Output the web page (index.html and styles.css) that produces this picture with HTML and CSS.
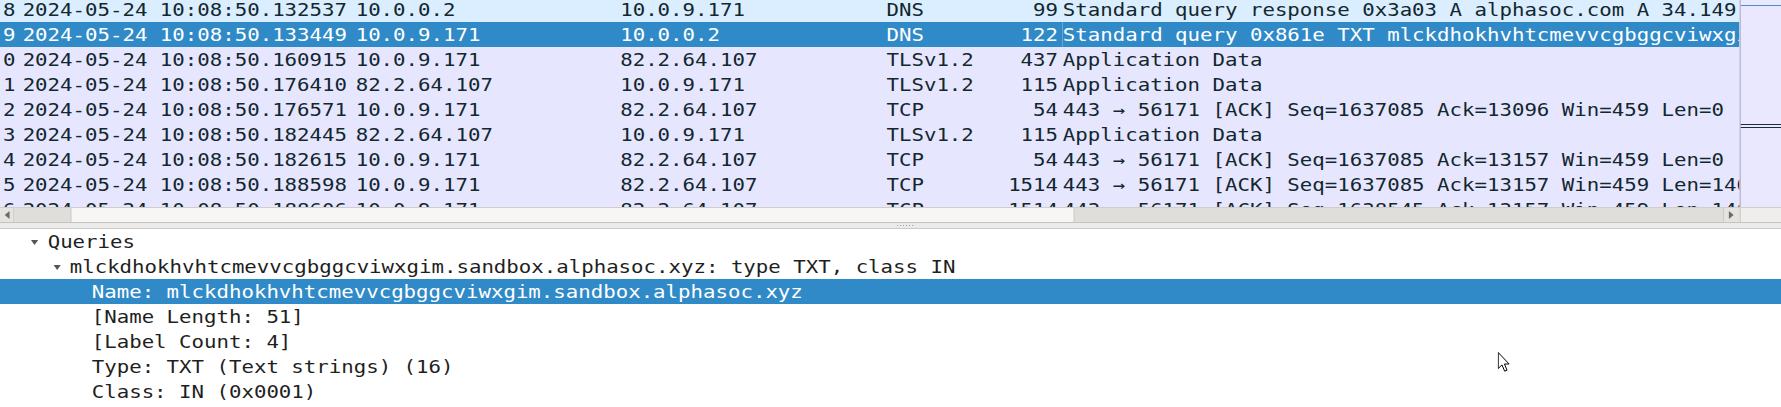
FILE: index.html
```html
<!DOCTYPE html>
<html>
<head>
<meta charset="utf-8">
<title>Wireshark packet list</title>
<link rel="stylesheet" href="styles.css">
</head>
<body>
<div class="app">
  <div class="plist">
    <div class="rows">
      <div class="rows-inner">
        <div class="row dns"><span class="c no">8</span><span class="c time">2024-05-24 10:08:50.132537</span><span class="c src">10.0.0.2</span><span class="c dst">10.0.9.171</span><span class="c proto">DNS</span><span class="c len">99</span><span class="c info">Standard query response 0x3a03 A alphasoc.com A 34.149.153.67</span></div>
        <div class="row sel"><span class="c no">9</span><span class="c time">2024-05-24 10:08:50.133449</span><span class="c src">10.0.9.171</span><span class="c dst">10.0.0.2</span><span class="c proto">DNS</span><span class="c len">122</span><span class="c info">Standard query 0x861e TXT mlckdhokhvhtcmevvcgbggcviwxgim.sandbox.alphasoc.xyz</span></div>
        <div class="row tcp"><span class="c no">0</span><span class="c time">2024-05-24 10:08:50.160915</span><span class="c src">10.0.9.171</span><span class="c dst">82.2.64.107</span><span class="c proto">TLSv1.2</span><span class="c len">437</span><span class="c info">Application Data</span></div>
        <div class="row tcp"><span class="c no">1</span><span class="c time">2024-05-24 10:08:50.176410</span><span class="c src">82.2.64.107</span><span class="c dst">10.0.9.171</span><span class="c proto">TLSv1.2</span><span class="c len">115</span><span class="c info">Application Data</span></div>
        <div class="row tcp"><span class="c no">2</span><span class="c time">2024-05-24 10:08:50.176571</span><span class="c src">10.0.9.171</span><span class="c dst">82.2.64.107</span><span class="c proto">TCP</span><span class="c len">54</span><span class="c info">443 → 56171 [ACK] Seq=1637085 Ack=13096 Win=459 Len=0</span></div>
        <div class="row tcp"><span class="c no">3</span><span class="c time">2024-05-24 10:08:50.182445</span><span class="c src">82.2.64.107</span><span class="c dst">10.0.9.171</span><span class="c proto">TLSv1.2</span><span class="c len">115</span><span class="c info">Application Data</span></div>
        <div class="row tcp"><span class="c no">4</span><span class="c time">2024-05-24 10:08:50.182615</span><span class="c src">10.0.9.171</span><span class="c dst">82.2.64.107</span><span class="c proto">TCP</span><span class="c len">54</span><span class="c info">443 → 56171 [ACK] Seq=1637085 Ack=13157 Win=459 Len=0</span></div>
        <div class="row tcp"><span class="c no">5</span><span class="c time">2024-05-24 10:08:50.188598</span><span class="c src">10.0.9.171</span><span class="c dst">82.2.64.107</span><span class="c proto">TCP</span><span class="c len">1514</span><span class="c info">443 → 56171 [ACK] Seq=1637085 Ack=13157 Win=459 Len=1460</span></div>
        <div class="row tcp"><span class="c no">6</span><span class="c time">2024-05-24 10:08:50.188606</span><span class="c src">10.0.9.171</span><span class="c dst">82.2.64.107</span><span class="c proto">TCP</span><span class="c len">1514</span><span class="c info">443 → 56171 [ACK] Seq=1638545 Ack=13157 Win=459 Len=1460</span></div>
      </div>
    </div>
    <div class="minimap">
      <div class="mm-view"></div>
      <div class="mm-sel"></div>
    </div>
  </div>
  <div class="hscroll">
    <div class="hs-btn hs-left"><span class="tri-left"></span></div>
    <div class="hs-track"><div class="hs-thumb"></div></div>
    <div class="hs-btn hs-right"><span class="tri-right"></span></div>
    <div class="hs-corner"></div>
  </div>
  <div class="splitter"><div class="grip"></div></div>
  <div class="details">
    <div class="node l0"><span class="exp"></span><span>Queries</span></div>
    <div class="node l1"><span class="exp"></span><span>mlckdhokhvhtcmevvcgbggcviwxgim.sandbox.alphasoc.xyz: type TXT, class IN</span></div>
    <div class="node l2 sel"><span>Name: mlckdhokhvhtcmevvcgbggcviwxgim.sandbox.alphasoc.xyz</span></div>
    <div class="node l2"><span>[Name Length: 51]</span></div>
    <div class="node l2"><span>[Label Count: 4]</span></div>
    <div class="node l2"><span>Type: TXT (Text strings) (16)</span></div>
    <div class="node l2"><span>Class: IN (0x0001)</span></div>
  </div>
  <svg class="cursor" width="10" height="20" viewBox="0 0 12 20" preserveAspectRatio="none">
    <path d="M0.5 0.5 L0.5 16.5 L4.3 12.9 L7 19.2 L9.4 18.2 L6.8 12 L11.5 12 Z" fill="#ffffff" stroke="#000000" stroke-width="1" stroke-linejoin="miter"/>
  </svg>
</div>
</body>
</html>
```

FILE: styles.css
```css
* {
  box-sizing: border-box;
}

html,
body {
  margin: 0;
  padding: 0;
  overflow: hidden;
  background: #ffffff;
}

body {
  width: 1781px;
  height: 407px;
}

.app {
  position: relative;
  width: 1495px;
  height: 407px;
  display: flex;
  flex-direction: column;
  transform: scaleX(1.1915);
  transform-origin: 0 0;
  font-family: "DejaVu Sans Mono", monospace;
  font-size: 17.4px;
}

/* ---------- packet list ---------- */
.plist {
  height: 207px;
  flex: none;
  display: flex;
  overflow: hidden;
  background: #e7e6ff;
}

.rows {
  width: 1459.5px;
  flex: none;
  overflow: hidden;
}

.rows-inner {
  margin-top: -3px;
}

.row {
  display: grid;
  grid-template-columns: 16px 282px 222px 223px 80px 68px 1fr;
  height: 25px;
  color: #12272e;
  white-space: nowrap;
}

.row.dns {
  background: #daeeff;
}

.row.tcp {
  background: #e7e6ff;
}

.row.sel {
  background: #308ac7;
  color: #ffffff;
}

.c {
  overflow: hidden;
  padding-top: 2px;
  line-height: 23px;
}

.no {
  text-align: right;
  padding-right: 3px;
}

.time {
  padding-left: 3px;
}

.src,
.dst {
  padding-left: 0.5px;
}

.proto {
  padding-left: 1px;
}

.len {
  text-align: right;
  padding-right: 3px;
}

.info {
  padding-left: 1px;
  overflow: visible;
}

.row.sel .info {
  box-shadow: inset 1px 0 0 #74abd6;
}

.minimap {
  flex: 1;
  border-left: 1px solid #b3b2c4;
  background: #e9e8ff;
}

.mm-view {
  margin-top: 5px;
  height: 1px;
  background: #4f8fcf;
}

.mm-sel {
  margin-top: 118px;
  height: 4px;
  border-top: 1px solid #1e2b38;
  border-bottom: 1px solid #1e2b38;
}

/* ---------- horizontal scrollbar ---------- */
.hscroll {
  height: 16px;
  flex: none;
  display: flex;
  background: #e0dedb;
  border-top: 1px solid #d0cec9;
  border-bottom: 1px solid #c5c3bf;
}

.hs-btn {
  display: flex;
  align-items: center;
  justify-content: center;
  flex: none;
}

.hs-left {
  width: 12px;
  border-right: 1px solid #cfcdc9;
  background: #e6e4e1;
}

.hs-right {
  width: 13.5px;
  border-left: 1px solid #cfcdc9;
  background: #e6e4e1;
}

.tri-left {
  width: 0;
  height: 0;
  border-top: 4px solid transparent;
  border-bottom: 4px solid transparent;
  border-right: 4px solid #6a6a6a;
}

.tri-right {
  width: 0;
  height: 0;
  border-top: 4px solid transparent;
  border-bottom: 4px solid transparent;
  border-left: 4px solid #6a6a6a;
}

.hs-track {
  flex: 1;
  background: #e0dedb;
}

.hs-thumb {
  margin-left: 47px;
  width: 843px;
  height: 100%;
  background: #f7f6f5;
  border-left: 1px solid #cbc9c5;
  border-right: 1px solid #cbc9c5;
}

.hs-corner {
  width: 35.5px;
  flex: none;
  background: #efeeec;
  border-left: 1px solid #cbc9c5;
}

/* ---------- splitter ---------- */
.splitter {
  height: 6px;
  flex: none;
  background: #edebe9;
  border-bottom: 1px solid #cdcbc8;
  padding: 2px 0 0 753px;
}

.grip {
  width: 15px;
  height: 1px;
  background: repeating-linear-gradient(to right, #a3a19d 0 1px, transparent 1px 2.5px);
}

/* ---------- packet details ---------- */
.details {
  flex: 1;
  background: #ffffff;
  overflow: hidden;
}

.node {
  display: flex;
  align-items: center;
  height: 25px;
  padding-top: 1px;
  line-height: 23px;
  white-space: nowrap;
  color: #1f1f1f;
}

.node.l0 {
  padding-left: 26px;
}

.node.l1 {
  padding-left: 44.5px;
}

.node.l2 {
  padding-left: 77px;
}

.node.sel {
  background: #308ac7;
  color: #ffffff;
}

.exp {
  width: 0;
  height: 0;
  margin-right: 8px;
  border-left: 3.5px solid transparent;
  border-right: 3.5px solid transparent;
  border-top: 5px solid #555555;
}

.cursor {
  position: absolute;
  left: 1257px;
  top: 352px;
}
```
